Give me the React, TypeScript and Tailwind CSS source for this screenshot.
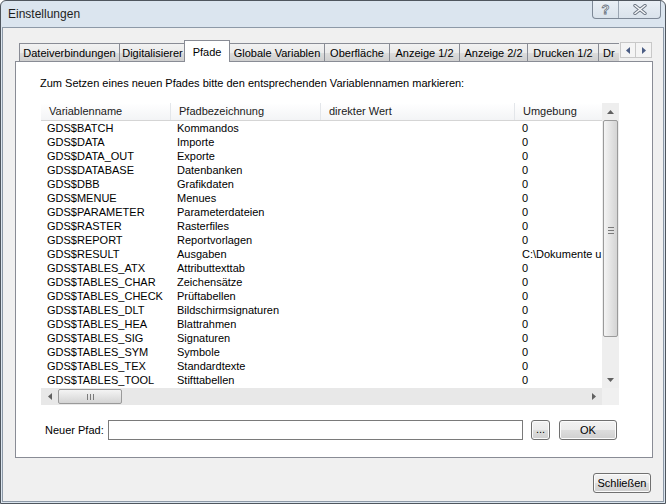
import React from "react";

const rows: [string, string, string][] = [
  ["GDS$BATCH", "Kommandos", "0"],
  ["GDS$DATA", "Importe", "0"],
  ["GDS$DATA_OUT", "Exporte", "0"],
  ["GDS$DATABASE", "Datenbanken", "0"],
  ["GDS$DBB", "Grafikdaten", "0"],
  ["GDS$MENUE", "Menues", "0"],
  ["GDS$PARAMETER", "Parameterdateien", "0"],
  ["GDS$RASTER", "Rasterfiles", "0"],
  ["GDS$REPORT", "Reportvorlagen", "0"],
  ["GDS$RESULT", "Ausgaben", "C:\\Dokumente u"],
  ["GDS$TABLES_ATX", "Attributtexttab", "0"],
  ["GDS$TABLES_CHAR", "Zeichensätze", "0"],
  ["GDS$TABLES_CHECK", "Prüftabellen", "0"],
  ["GDS$TABLES_DLT", "Bildschirmsignaturen", "0"],
  ["GDS$TABLES_HEA", "Blattrahmen", "0"],
  ["GDS$TABLES_SIG", "Signaturen", "0"],
  ["GDS$TABLES_SYM", "Symbole", "0"],
  ["GDS$TABLES_TEX", "Standardtexte", "0"],
  ["GDS$TABLES_TOOL", "Stifttabellen", "0"],
];

const tabs: { label: string; w: string; active?: boolean; cut?: boolean }[] = [
  { label: "Dateiverbindungen", w: "w-[100px]" },
  { label: "Digitalisierer", w: "w-[66px]" },
  { label: "Pfade", w: "w-[46px]", active: true },
  { label: "Globale Variablen", w: "w-[95px]" },
  { label: "Oberfläche", w: "w-[65px]" },
  { label: "Anzeige 1/2", w: "w-[70px]" },
  { label: "Anzeige 2/2", w: "w-[68px]" },
  { label: "Drucken 1/2", w: "w-[71px]" },
  { label: "Dr", w: "w-[30px]", cut: true },
];

const button =
  "flex items-center justify-center rounded-[3px] border border-[#707070] bg-[linear-gradient(#f2f2f2_0%,#ebebeb_50%,#dddddd_51%,#cfcfcf_100%)] shadow-[inset_0_0_0_1px_#fbfbfb] text-[11px] text-black";

function Tri({ dir, color = "#5a5a5a" }: { dir: "up" | "down" | "left" | "right"; color?: string }) {
  const pts = {
    up: "0,4 3.5,0 7,4",
    down: "0,0 3.5,4 7,0",
    left: "4,0 0,3.5 4,7",
    right: "0,0 4,3.5 0,7",
  }[dir];
  const vertical = dir === "up" || dir === "down";
  return (
    <svg width={vertical ? 7 : 4} height={vertical ? 4 : 7} viewBox={vertical ? "0 0 7 4" : "0 0 4 7"}>
      <polygon points={pts} fill={color} />
    </svg>
  );
}

function ListView() {
  return (
    <div className="ml-[25px] mt-[13px] grid h-[302px] w-[578px] grid-cols-[561px_17px] grid-rows-[285px_17px]">
      <div className="overflow-hidden bg-white">
        <div className="flex h-[18px] border-b border-[#d5d5d5] bg-[linear-gradient(#ffffff,#f3f4f6)] text-[11px] text-[#1a1a1a]">
          {[
            ["Variablenname", "w-[130px]"],
            ["Pfadbezeichnung", "w-[150px]"],
            ["direkter Wert", "w-[194px]"],
            ["Umgebung", "w-[87px]"],
          ].map(([label, w], i) => (
            <div
              key={label}
              className={`${w} flex items-center pl-[8px] ${i < 3 ? "border-r border-[#e3e6ea]" : ""}`}
            >
              {label}
            </div>
          ))}
        </div>
        <div className="font-['Liberation_Sans_Narrow','Liberation_Sans',sans-serif] text-[11px] leading-[14px] text-black">
          {rows.map(([name, desc, val]) => (
            <div key={name} className="flex h-[14px] whitespace-nowrap">
              <div className="w-[130px] pl-[6px]">{name}</div>
              <div className="w-[150px] pl-[6px]">{desc}</div>
              <div className="w-[194px]" />
              <div className="w-[87px] pl-[7px]">{val}</div>
            </div>
          ))}
        </div>
      </div>

      {/* vertical scrollbar */}
      <div className="flex flex-col bg-[#eeeeee]">
        <div className="flex h-[17px] items-center justify-center">
          <Tri dir="up" color="#606060" />
        </div>
        <div className="flex-1 px-[1px]">
          <div className="flex h-[217px] items-end justify-center rounded-[2px] border border-[#9a9a9a] bg-[linear-gradient(90deg,#f4f4f4,#e4e4e4_50%,#d4d4d4)] pb-[102px]">
            <div className="flex flex-col gap-[2px]">
              <div className="h-px w-[6px] bg-[#7a7a7a]" />
              <div className="h-px w-[6px] bg-[#7a7a7a]" />
              <div className="h-px w-[6px] bg-[#7a7a7a]" />
            </div>
          </div>
        </div>
        <div className="flex h-[17px] items-center justify-center">
          <Tri dir="down" color="#606060" />
        </div>
      </div>

      {/* horizontal scrollbar */}
      <div className="flex bg-[#e8e8e8]">
        <div className="flex w-[17px] items-center justify-center">
          <Tri dir="left" color="#606060" />
        </div>
        <div className="flex-1 py-[1px]">
          <div className="flex h-full w-[64px] items-center justify-center gap-[2px] rounded-[2px] border border-[#9a9a9a] bg-[linear-gradient(#f4f4f4,#e4e4e4_50%,#d4d4d4)]">
            <div className="h-[6px] w-px bg-[#7a7a7a]" />
            <div className="h-[6px] w-px bg-[#7a7a7a]" />
            <div className="h-[6px] w-px bg-[#7a7a7a]" />
          </div>
        </div>
        <div className="flex w-[17px] items-center justify-center">
          <Tri dir="right" color="#606060" />
        </div>
      </div>
      <div className="bg-[#f0f0f0]" />
    </div>
  );
}

export default function App() {
  return (
    <div className="h-[504px] w-[667px] bg-white font-['Liberation_Sans',Arial,sans-serif]">
      <div className="flex h-[504px] w-[666px] flex-col rounded-t-[6px] border border-[#4f565e] bg-[#dbe5ef] px-[1px] pb-[1px]">
        {/* title bar */}
        <div className="flex h-[26px] items-start justify-between">
          <div className="flex h-[26px] items-center pl-[6px] text-[12px] text-[#1e1e1e]">Einstellungen</div>
          <div className="mr-[3px] flex h-[18px] overflow-hidden rounded-b-[4px] border border-t-0 border-[#7d8896] bg-[linear-gradient(#e9eff5,#dae3ec)]">
            <div className="flex w-[26px] items-center justify-center border-r border-[#9aa5b2] text-[13px] font-bold text-[#f4f6f8] [-webkit-text-stroke:0.8px_#6b7582]">
              ?
            </div>
            <div className="flex w-[41px] items-center justify-center">
              <svg width="14" height="11" viewBox="0 0 14 11">
                <path d="M2 1.5 L12 9.5 M12 1.5 L2 9.5" stroke="#6b7582" strokeWidth="3.4" strokeLinecap="round" />
                <path d="M2 1.5 L12 9.5 M12 1.5 L2 9.5" stroke="#f4f6f8" strokeWidth="1.6" strokeLinecap="round" />
              </svg>
            </div>
          </div>
        </div>

        {/* body */}
        <div className="flex flex-1 flex-col border border-[#8d99a7] bg-[#f0f0f0] pt-[12px]">
          {/* tab strip */}
          <div className="relative z-10 -mb-px ml-[12px] flex h-[22px] w-[638px] items-end pl-[4px] text-[11px] text-black">
            <div className="flex w-[600px] items-end overflow-hidden">
              {tabs.map((t) =>
                t.active ? (
                  <div
                    key={t.label}
                    className={`${t.w} -mx-px flex h-[22px] shrink-0 items-start justify-center border border-b-0 border-[#898c95] bg-white pt-[3px]`}
                  >
                    {t.label}
                  </div>
                ) : (
                  <div
                    key={t.label}
                    className={`${t.w} flex h-[19px] shrink-0 items-center ${t.cut ? "pl-[4px]" : "justify-center"} border border-r-0 border-[#898c95] bg-[linear-gradient(#f2f2f2,#ebebeb_50%,#dddddd_51%,#cfcfcf)] pt-[1px]`}
                  >
                    <span className="whitespace-nowrap">{t.label}</span>
                  </div>
                ),
              )}
            </div>
            <div className="mb-[4px] ml-px flex">
              <div className="flex h-[16px] w-[16px] items-center justify-center border border-[#c8c8c8] bg-[#f4f4f4]">
                <Tri dir="left" color="#4b5d84" />
              </div>
              <div className="flex h-[16px] w-[16px] items-center justify-center border border-l-0 border-[#c8c8c8] bg-[#f4f4f4]">
                <Tri dir="right" color="#4b5d84" />
              </div>
            </div>
          </div>

          {/* panel */}
          <div className="ml-[12px] flex h-[397px] w-[638px] flex-col border border-[#898c95] bg-white">
            <p className="ml-[24px] mt-[14px] text-[11px] leading-[14px] text-black">
              Zum Setzen eines neuen Pfades bitte den entsprechenden Variablennamen markieren:
            </p>
            <ListView />
            <div className="mt-[15px] flex h-[20px] items-center text-[11px] text-black">
              <span className="ml-[29px] w-[63px]">Neuer Pfad:</span>
              <div className="h-[20px] w-[415px] border border-[#7a7a7a] bg-white" />
              <div className={`${button} ml-[8px] h-[20px] w-[19px] items-end pb-[4px] text-[10px] leading-none`}>...</div>
              <div className={`${button} ml-[9px] h-[20px] w-[58px]`}>OK</div>
            </div>
          </div>

          {/* footer */}
          <div className="mt-[15px] flex justify-end pr-[12px]">
            <div className={`${button} h-[20px] w-[58px]`}>Schließen</div>
          </div>
        </div>
      </div>
    </div>
  );
}
